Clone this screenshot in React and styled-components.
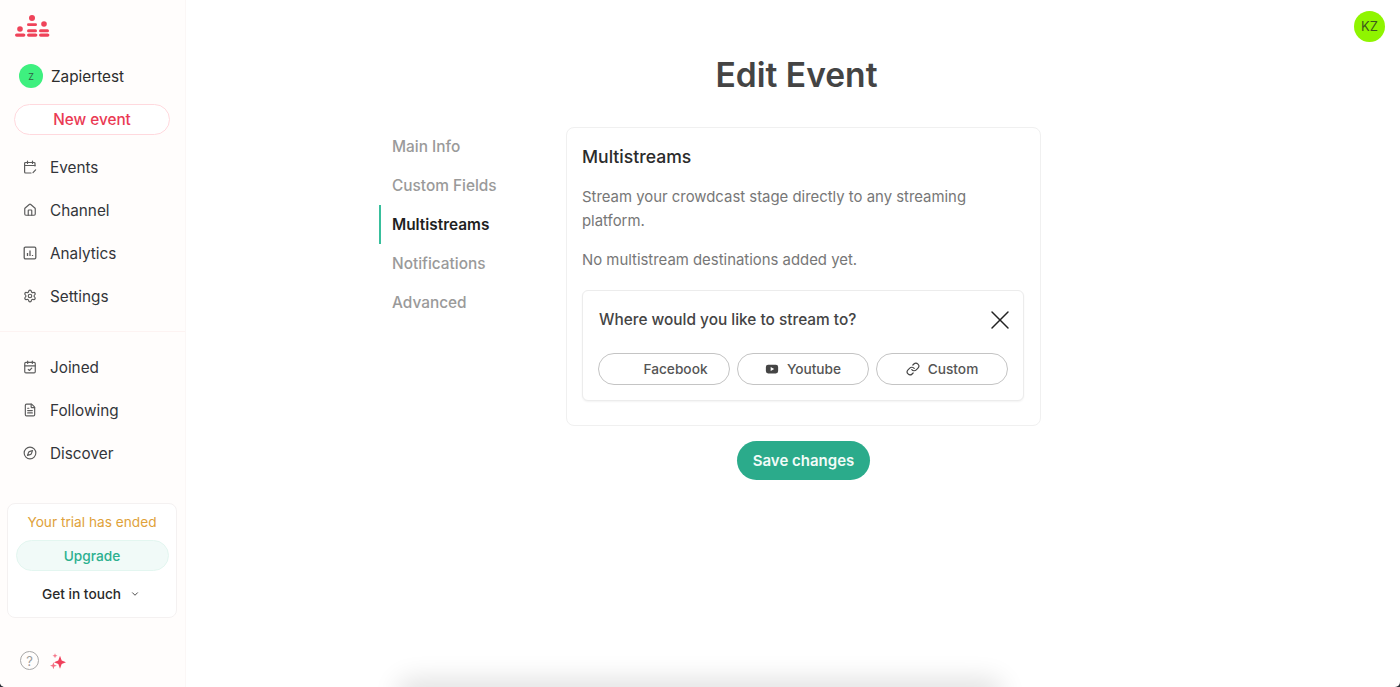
import React from "react";
import styled, { createGlobalStyle } from "styled-components";
import {
  CalendarCheck,
  ChevronDown,
  Compass,
  FileText,
  Home,
  Link as LinkIcon,
  Settings,
  X,
} from "lucide-react";

const GlobalStyle = createGlobalStyle`
  html, body {
    margin: 0;
    padding: 0;
    height: 100%;
    background: #2b2f36;
    overflow: hidden;
  }
  body {
    font-family: Inter, "Liberation Sans", sans-serif;
  }
`;

const Page = styled.div`
  position: relative;
  display: flex;
  width: 1400px;
  height: 687px;
  overflow: hidden;
  background: #fff;
  border-radius: 0 0 5px 5px;
`;

const Sidebar = styled.aside`
  flex: 0 0 186px;
  height: 687px;
  box-sizing: border-box;
  display: flex;
  flex-direction: column;
  background: #fffdfc;
  border-right: 1px solid #fbf7f6;
`;

const LogoWrap = styled.div`
  height: 64px;
  padding: 15px 0 0 15px;
  box-sizing: border-box;
`;

const Account = styled.div`
  display: flex;
  align-items: center;
  gap: 8px;
  height: 24px;
  padding-left: 19px;
  font-size: 15.3px;
  color: #2d2d2d;
`;

const AccountBadge = styled.span`
  width: 24px;
  height: 24px;
  border-radius: 50%;
  background: #3ef07f;
  display: flex;
  align-items: center;
  justify-content: center;
  font-size: 9px;
  color: #2f5d45;
`;

const NewEvent = styled.div`
  width: 156px;
  height: 31px;
  margin: 16px 0 0 14px;
  box-sizing: border-box;
  border: 1px solid #ffd9de;
  border-radius: 16px;
  background: #fff;
  display: flex;
  align-items: center;
  justify-content: center;
  font-size: 15.3px;
  font-weight: 500;
  color: #ea3a54;
`;

const NavGroup = styled.nav`
  display: flex;
  flex-direction: column;
  gap: 13px;
  padding-top: ${(p) => p.$top}px;
`;

const NavItem = styled.div`
  display: flex;
  align-items: center;
  gap: 13px;
  height: 30px;
  padding-left: 23px;
  font-size: 15.3px;
  color: #33353a;

  svg {
    width: 14px;
    height: 14px;
    color: #5c5c5c;
    flex: none;
  }
`;

const Divider = styled.div`
  height: 1px;
  margin-top: 20px;
  background: #fdf3f2;
`;

const TrialCard = styled.div`
  width: 170px;
  height: 115px;
  margin: 35px 0 0 7px;
  box-sizing: border-box;
  padding-top: 10px;
  border: 1px solid #f4f1f1;
  border-radius: 8px;
  background: #fff;
  display: flex;
  flex-direction: column;
  align-items: center;
`;

const TrialText = styled.div`
  font-size: 13.7px;
  line-height: 16px;
  color: #e0a23a;
`;

const Upgrade = styled.div`
  width: 153px;
  height: 31px;
  margin-top: 10px;
  box-sizing: border-box;
  border: 1px solid #e3f6f0;
  border-radius: 16px;
  background: #f1faf8;
  display: flex;
  align-items: center;
  justify-content: center;
  font-size: 13.7px;
  font-weight: 500;
  color: #2cb08f;
`;

const Touch = styled.div`
  display: flex;
  align-items: center;
  gap: 9px;
  margin-top: 15px;
  padding-right: 2px;
  font-size: 13.7px;
  font-weight: 500;
  color: #2a2a2a;

  svg {
    width: 10px;
    height: 10px;
  }
`;

const HelpRow = styled.div`
  display: flex;
  align-items: center;
  gap: 11px;
  padding: 33px 0 0 20px;
`;

const Help = styled.span`
  width: 17px;
  height: 17px;
  border: 1.5px solid #a8a8a8;
  border-radius: 50%;
  display: flex;
  align-items: center;
  justify-content: center;
  font-size: 13px;
  color: #9c9c9c;
`;

const Main = styled.main`
  flex: 1;
  min-width: 0;
  display: flex;
  flex-direction: column;
`;

const Title = styled.h1`
  margin: 53px 0 0 0;
  padding-left: 7px;
  height: 44px;
  font-size: 33.6px;
  line-height: 44px;
  font-weight: 600;
  color: #444;
  text-align: center;
`;

const Columns = styled.div`
  display: flex;
  margin: 30px 0 0 193px;
`;

const SideTabs = styled.div`
  width: 187px;
  display: flex;
  flex-direction: column;
`;

const Tab = styled.div`
  height: 39px;
  display: flex;
  align-items: center;
  box-sizing: border-box;
  padding-left: ${(p) => (p.$active ? 11 : 13)}px;
  border-left: ${(p) => (p.$active ? "2px solid #38bf9c" : "none")};
  font-size: 15.4px;
  font-weight: ${(p) => (p.$active ? 600 : 500)};
  color: ${(p) => (p.$active ? "#1f1f1f" : "#9a9a9a")};
`;

const FormColumn = styled.div`
  width: 475px;
  display: flex;
  flex-direction: column;
  align-items: center;
`;

const Card = styled.section`
  width: 475px;
  height: 299px;
  box-sizing: border-box;
  padding: 18px 16px 0 15px;
  border: 1px solid #f0f0f0;
  border-radius: 8px;
  background: #fff;
`;

const CardTitle = styled.h2`
  margin: 0;
  font-size: 17.6px;
  line-height: 22px;
  font-weight: 500;
  color: #2b2b2b;
`;

const Text = styled.p`
  margin: ${(p) => p.$top}px 0 0;
  font-size: 14.9px;
  line-height: 24px;
  color: #777;
`;

const Picker = styled.div`
  height: 111px;
  margin-top: 18px;
  box-sizing: border-box;
  padding: 0 15px;
  border: 1px solid #ececec;
  border-radius: 6px;
  background: #fff;
  box-shadow: 0 1px 2px rgba(0, 0, 0, 0.05);
`;

const PickerHead = styled.div`
  height: 62px;
  box-sizing: border-box;
  padding: 0 0 6px 1px;
  display: flex;
  align-items: center;
  justify-content: space-between;
  font-size: 15.4px;
  font-weight: 500;
  color: #444;

  svg {
    width: 32px;
    height: 32px;
    margin: 2px -8px 0 0;
    color: #222;
  }
`;

const Buttons = styled.div`
  display: grid;
  grid-template-columns: repeat(3, 132px);
  gap: 7px;
`;

const Choice = styled.div`
  height: 32px;
  box-sizing: border-box;
  border: 1px solid #c4c4c4;
  border-radius: 16px;
  display: flex;
  align-items: center;
  justify-content: center;
  gap: 8px;
  font-size: 13.7px;
  font-weight: 500;
  color: #555;

  svg {
    width: 14px;
    height: 14px;
    color: #444;
  }
`;

const Spacer = styled.span`
  width: 15px;
`;

const Save = styled.div`
  width: 133px;
  height: 39px;
  margin-top: 15px;
  border-radius: 20px;
  background: #2bab8b;
  display: flex;
  align-items: center;
  justify-content: center;
  font-size: 15px;
  font-weight: 600;
  color: #f2fbf8;
`;

const UserBadge = styled.div`
  position: absolute;
  top: 11px;
  right: 15px;
  width: 31px;
  height: 31px;
  box-sizing: border-box;
  padding-bottom: 1px;
  border-radius: 50%;
  background: #8ff500;
  display: flex;
  align-items: center;
  justify-content: center;
  font-size: 13px;
  color: #3d5a1c;
`;

const BottomShadow = styled.div`
  position: absolute;
  left: 405px;
  right: 405px;
  bottom: -14px;
  height: 14px;
  border-radius: 8px;
  box-shadow: 0 0 26px 8px rgba(0, 0, 0, 0.12);
`;

const Logo = () => (
  <svg width="36" height="24" viewBox="0 0 36 24" fill="#ef4359" style={{ display: "block" }}>
    <circle cx="17" cy="3" r="3" />
    <rect x="12" y="8.3" width="10" height="2.8" rx="1.4" />
    <circle cx="5" cy="14" r="2.8" />
    <circle cx="29" cy="9" r="2.8" />
    <rect x="12" y="14.2" width="10" height="3" rx="1.5" />
    <rect x="24" y="14.2" width="10" height="3" rx="1.5" />
    <rect x="0" y="18.4" width="10.4" height="3.4" rx="1.7" />
    <rect x="12" y="18.4" width="10.4" height="3.4" rx="1.7" />
    <rect x="24" y="18.4" width="10.4" height="3.4" rx="1.7" />
  </svg>
);

const EventsIcon = () => (
  <svg viewBox="0 0 14 14" fill="none" stroke="currentColor" strokeWidth="1.2" strokeLinecap="round">
    <path d="M12 6V3.5a1 1 0 0 0-1-1H2.6a1 1 0 0 0-1 1V12a1 1 0 0 0 1 1H8" />
    <path d="M4.5 1v2.5M9.5 1v2.5M1.6 5.5H12" />
    <path d="M10 12.6l2.6-2.8" />
  </svg>
);

const AnalyticsIcon = () => (
  <svg viewBox="0 0 14 14" fill="none" stroke="currentColor" strokeWidth="1.3">
    <rect x="1.2" y="1.2" width="11.6" height="11.6" rx="1.2" />
    <path d="M4.5 10V7M7 10V4.5M9.5 10V9" />
  </svg>
);

const YoutubeIcon = () => (
  <svg viewBox="0 0 16 16">
    <rect x="1" y="3" width="14" height="10" rx="2.6" fill="currentColor" />
    <path d="M6.5 5.8L10.5 8l-4 2.2z" fill="#fff" />
  </svg>
);

const Sparkles = () => (
  <svg width="18" height="18" viewBox="0 0 18 18" fill="#f0415c">
    <path d="M10 3.8l1.7 4.8 4.3 1.7-4.3 1.7-1.7 4.8-1.7-4.8-4.3-1.7 4.3-1.7z" />
    <path d="M5 1.2l.7 1.8 1.8.7-1.8.7L5 6.2l-.7-1.8-1.8-.7 1.8-.7z" opacity="0.7" />
    <path d="M3.4 10.2l.9 2.6 2.6.9-2.6.9-.9 2.6-.9-2.6-2.6-.9 2.6-.9z" opacity="0.75" />
  </svg>
);

const topNav = [
  { label: "Events", icon: <EventsIcon /> },
  { label: "Channel", icon: <Home /> },
  { label: "Analytics", icon: <AnalyticsIcon /> },
  { label: "Settings", icon: <Settings /> },
];

const bottomNav = [
  { label: "Joined", icon: <CalendarCheck /> },
  { label: "Following", icon: <FileText /> },
  { label: "Discover", icon: <Compass /> },
];

const tabs = ["Main Info", "Custom Fields", "Multistreams", "Notifications", "Advanced"];

export default function App() {
  return (
    <Page>
      <GlobalStyle />
      <Sidebar>
        <LogoWrap>
          <Logo />
        </LogoWrap>
        <Account>
          <AccountBadge>Z</AccountBadge>
          Zapiertest
        </Account>
        <NewEvent>New event</NewEvent>
        <NavGroup $top={17}>
          {topNav.map((item) => (
            <NavItem key={item.label}>
              {item.icon}
              {item.label}
            </NavItem>
          ))}
        </NavGroup>
        <Divider />
        <NavGroup $top={20}>
          {bottomNav.map((item) => (
            <NavItem key={item.label}>
              {item.icon}
              {item.label}
            </NavItem>
          ))}
        </NavGroup>
        <TrialCard>
          <TrialText>Your trial has ended</TrialText>
          <Upgrade>Upgrade</Upgrade>
          <Touch>
            Get in touch
            <ChevronDown />
          </Touch>
        </TrialCard>
        <HelpRow>
          <Help>?</Help>
          <Sparkles />
        </HelpRow>
      </Sidebar>
      <Main>
        <Title>Edit Event</Title>
        <Columns>
          <SideTabs>
            {tabs.map((tab) => (
              <Tab key={tab} $active={tab === "Multistreams"}>
                {tab}
              </Tab>
            ))}
          </SideTabs>
          <FormColumn>
            <Card>
              <CardTitle>Multistreams</CardTitle>
              <Text $top={17}>Stream your crowdcast stage directly to any streaming platform.</Text>
              <Text $top={15}>No multistream destinations added yet.</Text>
              <Picker>
                <PickerHead>
                  Where would you like to stream to?
                  <X strokeWidth={1.1} />
                </PickerHead>
                <Buttons>
                  <Choice>
                    <Spacer />
                    Facebook
                  </Choice>
                  <Choice>
                    <YoutubeIcon />
                    Youtube
                  </Choice>
                  <Choice>
                    <LinkIcon />
                    Custom
                  </Choice>
                </Buttons>
              </Picker>
            </Card>
            <Save>Save changes</Save>
          </FormColumn>
        </Columns>
      </Main>
      <UserBadge>KZ</UserBadge>
      <BottomShadow />
    </Page>
  );
}
